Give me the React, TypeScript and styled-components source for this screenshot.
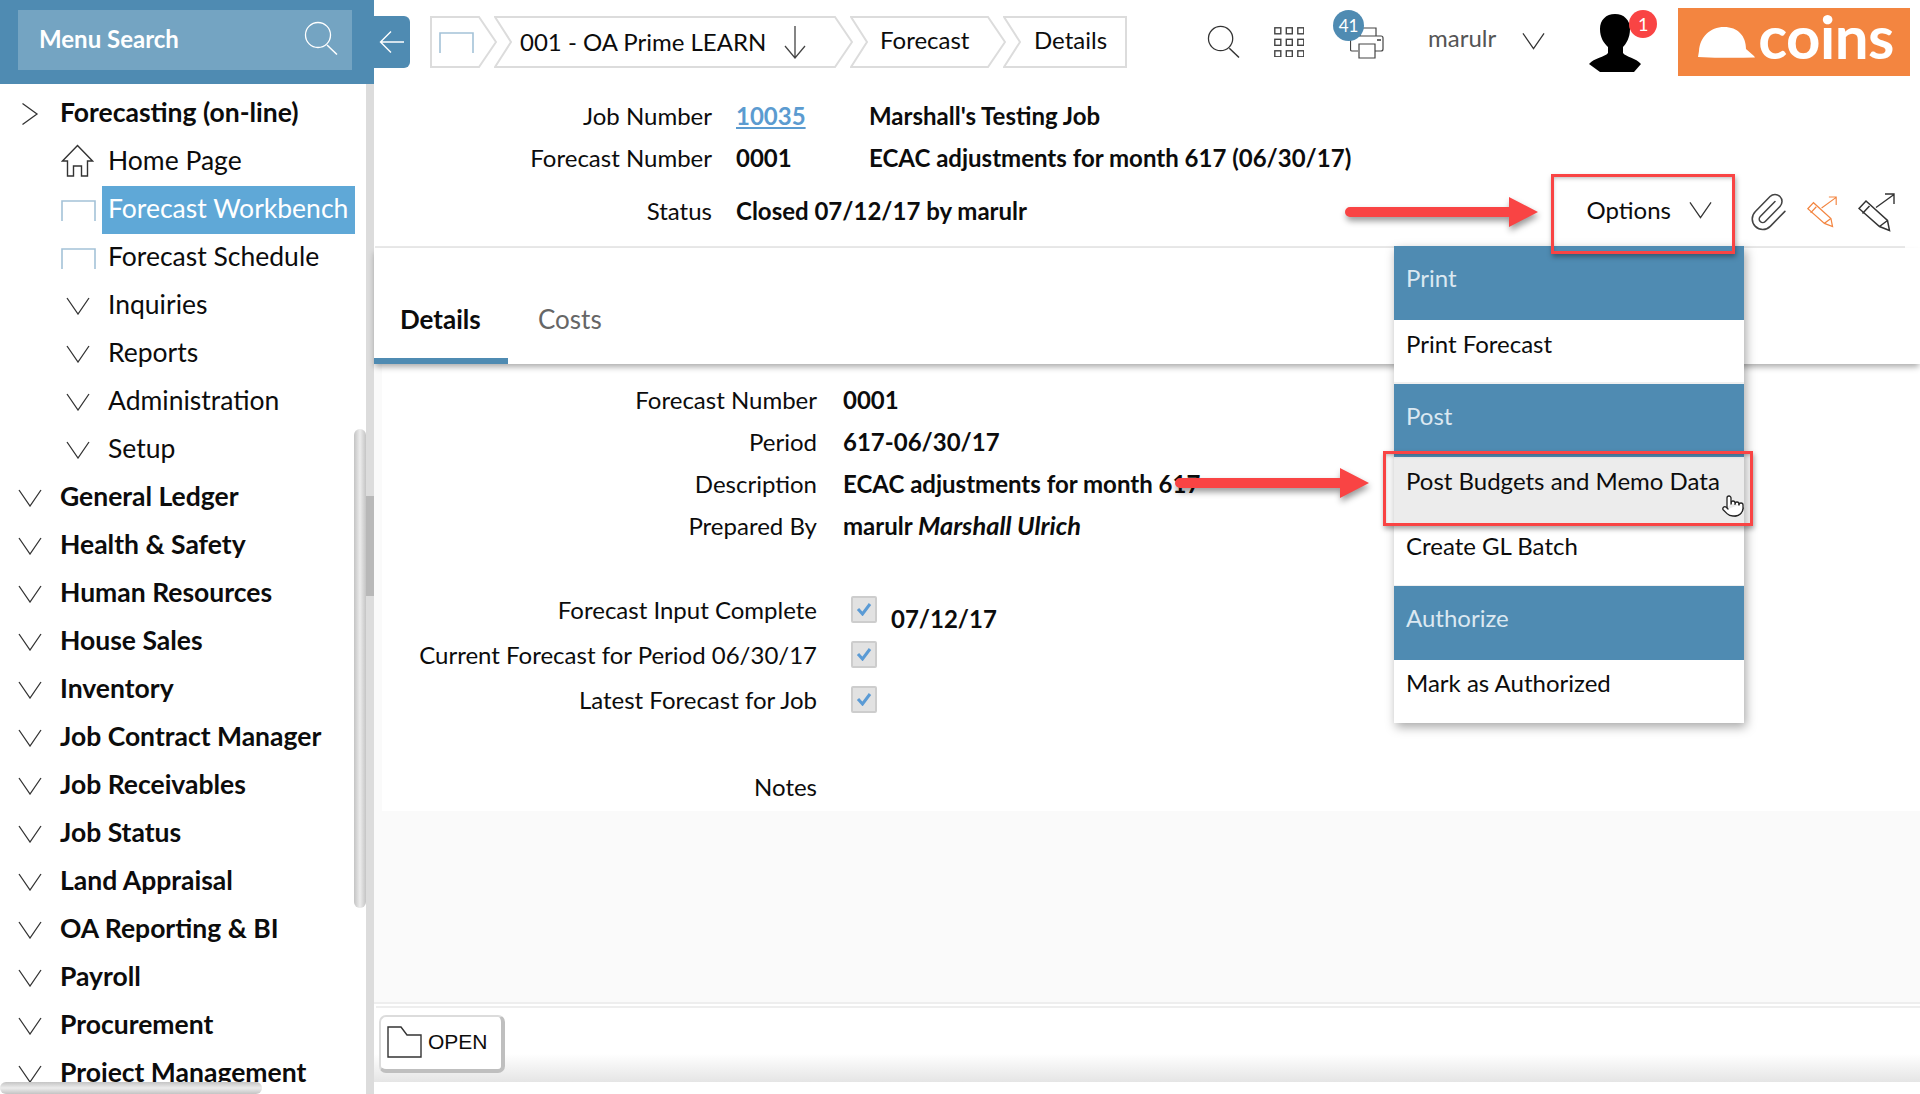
import React from "react";
import styled, { createGlobalStyle } from "styled-components";
import { Pointer, Paperclip } from "lucide-react";

const BLUE = "#4f8bb2";
const RED = "#f94444";
const INK = "#0c0c0c";

const Global = createGlobalStyle`
  html, body { margin: 0; padding: 0; background: #fff; overflow: hidden; }
  * { box-sizing: border-box; }
  body { font-family: Lato, "Open Sans", sans-serif; color: ${INK}; }
`;

const Page = styled.div`
  position: relative;
  width: 1920px;
  height: 1094px;
  overflow: hidden;
  display: grid;
  grid-template-columns: 374px 1fr;
`;

/* ---------- sidebar ---------- */
const Sidebar = styled.aside`
  position: relative;
  height: 1094px;
  display: flex;
  flex-direction: column;
  overflow: hidden;
`;
const SideHead = styled.div`
  flex: none;
  height: 84px;
  padding: 10px 22px 14px 18px;
  background: ${BLUE};
`;
const SearchBox = styled.div`
  height: 60px;
  padding: 0 14px 4px 21px;
  display: flex;
  align-items: center;
  justify-content: space-between;
  background: #74a4c2;
  color: #fff;
  font-size: 24px;
  font-weight: 700;
`;
const TreeClip = styled.div`
  height: 998px;
  padding-top: 6px;
  overflow: hidden;
`;
const Row = styled.div<{ $sub?: boolean }>`
  height: 48px;
  display: flex;
  align-items: center;
  padding-left: ${(p) => (p.$sub ? "61px" : "18px")};
`;
const IconSlot = styled.span<{ $sub?: boolean; $nudge?: number }>`
  flex: none;
  width: ${(p) => (p.$sub ? "47px" : "42px")};
  padding-left: ${(p) => p.$nudge ?? 0}px;
  display: flex;
  align-items: center;
`;
const RowLabel = styled.span<{ $sub?: boolean; $active?: boolean }>`
  font-size: 26.5px;
  line-height: 44px;
  padding-bottom: 4px;
  font-weight: ${(p) => (p.$sub ? 400 : 700)};
  color: ${(p) => (p.$active ? "#fff" : INK)};
  background: ${(p) => (p.$active ? "#5fa8d7" : "transparent")};
  padding-left: ${(p) => (p.$active ? "6px" : "0")};
  padding-right: ${(p) => (p.$active ? "7px" : "0")};
  margin-left: ${(p) => (p.$active ? "-6px" : "0")};
  white-space: nowrap;
`;
const VTrack = styled.div`
  position: absolute;
  right: 0;
  top: 84px;
  bottom: 0;
  width: 8px;
  background: #dcdcdc;
`;
const VTrackThumb = styled.div`
  position: absolute;
  left: 0;
  top: 412px;
  width: 8px;
  height: 100px;
  background: #b8b8b8;
`;
const VThumb = styled.div`
  position: absolute;
  left: 354px;
  top: 429px;
  width: 12px;
  height: 479px;
  border-radius: 6px;
  background: linear-gradient(90deg, #c4c4c4, #ececec 50%, #c4c4c4);
`;
const HBarMask = styled.div`
  position: absolute;
  left: 0;
  right: 8px;
  bottom: 0;
  height: 12px;
  background: #fff;
`;
const HThumb = styled.div`
  position: absolute;
  left: 0;
  bottom: 0;
  width: 262px;
  height: 12px;
  border-radius: 6px;
  background: linear-gradient(180deg, #c4c4c4, #ececec 50%, #c4c4c4);
`;

/* ---------- main ---------- */
const Main = styled.main`
  display: flex;
  flex-direction: column;
  min-width: 0;
  height: 1094px;
  background: #fff;
`;
const TopBar = styled.header`
  flex: none;
  height: 84px;
  padding-top: 16px;
  display: flex;
  align-items: flex-start;
`;
const BackTab = styled.div`
  width: 36px;
  height: 52px;
  background: ${BLUE};
  border-radius: 0 6px 6px 0;
  display: flex;
  align-items: center;
  justify-content: center;
`;
const Crumbs = styled.nav`
  margin-left: 20px;
  display: flex;
  height: 52px;
`;
const Crumb = styled.div<{ $w: number; $pad: number }>`
  position: relative;
  width: ${(p) => p.$w}px;
  margin-right: -3px;
  padding-left: ${(p) => p.$pad}px;
  display: flex;
  align-items: center;
  gap: 18px;
  font-size: 24px;
  white-space: nowrap;
`;
const CrumbShape = styled.svg`
  position: absolute;
  left: 0;
  top: 0;
  width: 100%;
  height: 100%;
  z-index: 0;
`;
const CrumbText = styled.span<{ $up?: number }>`
  position: relative;
  display: flex;
  align-items: center;
  margin-top: ${(p) => -(p.$up ?? 0)}px;
`;
const TopIcons = styled.div`
  margin-left: 83px;
  display: flex;
  align-items: flex-start;
`;
const IconBtn = styled.span<{ $ml?: number; $mt?: number }>`
  position: relative;
  display: block;
  margin-left: ${(p) => p.$ml ?? 0}px;
  margin-top: ${(p) => p.$mt ?? 0}px;
  line-height: 0;
`;
const Count = styled.span<{ $bg: string; $size: number; $left: number; $top: number; $fs: number }>`
  position: absolute;
  left: ${(p) => p.$left}px;
  top: ${(p) => p.$top}px;
  width: ${(p) => p.$size}px;
  height: ${(p) => p.$size}px;
  border-radius: 50%;
  background: ${(p) => p.$bg};
  color: #fff;
  font-size: ${(p) => p.$fs}px;
  line-height: ${(p) => p.$size}px;
  text-align: center;
`;
const UserName = styled.span`
  margin-left: 44px;
  margin-top: 7px;
  font-size: 24px;
  line-height: 30px;
  color: #555;
`;
const Logo = styled.div`
  position: relative;
  margin-left: 37px;
  margin-top: -8px;
  width: 232px;
  height: 68px;
  background: #f38540;
  padding-left: 19px;
  display: flex;
  align-items: center;
  gap: 3px;
`;
const LogoText = styled.span`
  color: #fff;
  font-size: 60px;
  line-height: 60px;
  font-weight: 700;
  letter-spacing: -0.5px;
  margin-top: -13px;
`;

const InfoBlock = styled.section`
  flex: none;
  height: 162px;
  padding-top: 10px;
  display: flex;
  flex-direction: column;
`;
const InfoRow = styled.div<{ $h: number }>`
  height: ${(p) => p.$h}px;
  display: flex;
  align-items: center;
  font-size: 24px;
`;
const InfoLabel = styled.span`
  flex: none;
  width: 338px;
  text-align: right;
`;
const InfoValue = styled.span<{ $w?: number }>`
  margin-left: 24px;
  width: ${(p) => (p.$w ? `${p.$w}px` : "auto")};
  font-weight: 700;
  white-space: nowrap;
`;
const JobLink = styled.a`
  color: #5b9bd0;
  text-decoration: underline;
`;
const Extra = styled.span`
  font-weight: 700;
  white-space: nowrap;
`;
const Tools = styled.div`
  margin-left: auto;
  padding-right: 25px;
  display: flex;
  align-items: center;
`;
const OptionsBtn = styled.div`
  display: flex;
  align-items: center;
  gap: 18px;
  font-size: 24px;
  margin-right: 35px;
  line-height: 28px;
`;
const ToolIcon = styled.span<{ $ml?: number }>`
  display: block;
  line-height: 0;
  margin-top: 4px;
  margin-left: ${(p) => p.$ml ?? 0}px;
  color: #444;
`;
const Divider = styled.div`
  flex: none;
  height: 2px;
  margin: 0 15px 0 1px;
  background: #e9e9e9;
`;
const TabBar = styled.div`
  position: relative;
  flex: none;
  height: 116px;
  padding-top: 13px;
  display: flex;
  box-shadow: 0 4px 6px -1px rgba(0, 0, 0, 0.33);
  z-index: 1;
  background: #fff;
`;
const Tab = styled.div<{ $on?: boolean }>`
  width: ${(p) => (p.$on ? "134px" : "auto")};
  height: 103px;
  padding: ${(p) => (p.$on ? "42px 0 0 26px" : "42px 0 0 30px")};
  font-size: 26px;
  line-height: 32px;
  font-weight: ${(p) => (p.$on ? 700 : 400)};
  color: ${(p) => (p.$on ? INK : "#666")};
  border-bottom: ${(p) => (p.$on ? `6px solid ${BLUE}` : "0")};
`;
const Body = styled.div`
  flex: 1;
  display: flex;
  flex-direction: column;
  padding-left: 8px;
  background: #fafafa;
  min-height: 0;
`;
const Panel = styled.div`
  flex: none;
  height: 447px;
  background: #fff;
  padding-top: 14px;
`;
const FormRow = styled.div<{ $h: number; $mt?: number }>`
  height: ${(p) => p.$h}px;
  margin-top: ${(p) => p.$mt ?? 0}px;
  display: flex;
  align-items: center;
  font-size: 24px;
`;
const FormLabel = styled.span`
  flex: none;
  width: 435px;
  text-align: right;
  white-space: nowrap;
`;
const FormValue = styled.span`
  margin-left: 26px;
  font-weight: 700;
  white-space: nowrap;
`;
const Italic = styled.em`
  font-style: italic;
  font-size: 25.4px;
`;
const CheckBox = styled.span`
  margin-left: 34px;
  width: 26px;
  height: 27px;
  background: #e2e2e2;
  border: 2px solid #cdcdcd;
  border-radius: 2px;
  display: flex;
  align-items: center;
  justify-content: center;
`;
const CheckDate = styled.span`
  margin-left: 14px;
  margin-top: 18px;
  font-weight: 700;
`;
const Spacer = styled.div`
  flex: 1;
`;
const Footer = styled.footer`
  flex: none;
  height: 92px;
  margin-left: -8px;
  background: #fff;
`;
const FooterRule = styled.div`
  height: 2px;
  background: #eee;
`;
const FooterRule2 = styled.div`
  height: 2px;
  margin: 2px 0 0 2px;
  background: #eee;
`;
const FooterBar = styled.div`
  height: 74px;
  padding: 7px 0 0 5px;
  background: linear-gradient(180deg, #fff 0, #fff 62%, #e5e5e5 100%);
`;
const OpenBtn = styled.div`
  width: 126px;
  height: 58px;
  padding-left: 6px;
  padding-bottom: 2px;
  background: #fff;
  border: 2px solid #dcdcdc;
  border-right: 4px solid #bfbfbf;
  border-bottom: 4px solid #bfbfbf;
  border-radius: 7px;
  display: flex;
  align-items: center;
  gap: 6px;
  font-family: "Liberation Sans", Arial, sans-serif;
  font-size: 21px;
`;

/* ---------- dropdown ---------- */
const Menu = styled.div`
  position: absolute;
  left: 1394px;
  top: 246px;
  width: 350px;
  background: #f0f0f0;
  box-shadow: 2px 4px 10px rgba(0, 0, 0, 0.35);
  z-index: 5;
  display: flex;
  flex-direction: column;
`;
const MenuHead = styled.div<{ $h: number }>`
  height: ${(p) => p.$h}px;
  padding: 14px 0 0 12px;
  background: ${BLUE};
  color: #dbe8f1;
  font-size: 24px;
  line-height: 36px;
`;
const MenuItem = styled.div<{ $h: number; $top: number; $hot?: boolean; $mb?: number }>`
  position: relative;
  height: ${(p) => p.$h}px;
  margin-bottom: ${(p) => p.$mb ?? 0}px;
  padding: ${(p) => p.$top}px 0 0 12px;
  background: ${(p) => (p.$hot ? "#ececec" : "#fff")};
  font-size: 24px;
  line-height: 36px;
  white-space: nowrap;
`;
const HandCursor = styled.span`
  position: absolute;
  left: 327px;
  top: 37px;
  line-height: 0;
  color: #222;
`;
const RedBox = styled.div<{ $l: number; $t: number; $w: number; $h: number }>`
  position: absolute;
  left: ${(p) => p.$l}px;
  top: ${(p) => p.$t}px;
  width: ${(p) => p.$w}px;
  height: ${(p) => p.$h}px;
  border: 3px solid ${RED};
  box-shadow: 1px 3px 5px rgba(0, 0, 0, 0.35), inset 1px 3px 4px -2px rgba(0, 0, 0, 0.3);
  z-index: 6;
`;
const ArrowSvg = styled.svg<{ $l: number; $t: number }>`
  position: absolute;
  left: ${(p) => p.$l}px;
  top: ${(p) => p.$t}px;
  z-index: 7;
  overflow: visible;
  filter: drop-shadow(1px 4px 3px rgba(0, 0, 0, 0.4));
`;

/* ---------- icons ---------- */
const Chev = ({ dir = "down", big = false }: { dir?: "down" | "right"; big?: boolean }) =>
  dir === "right" ? (
    <svg width="20" height="24" viewBox="0 0 20 24">
      <path d="M2.5 1.5 L17 12 L2.5 22.5" fill="none" stroke="#333" strokeWidth="1.3" />
    </svg>
  ) : (
    <svg width={big ? 23 : 24} height="18" viewBox="0 0 24 18">
      <path d="M1 1 L12 17 L23 1" fill="none" stroke="#333" strokeWidth="1.3" />
    </svg>
  );

const Blank = () => (
  <svg width="35" height="21" viewBox="0 0 35 21">
    <path d="M1 21 V1 H34 V21" fill="none" stroke="#a4c2d8" strokeWidth="1.6" />
  </svg>
);

const Home = () => (
  <svg width="33" height="34" viewBox="0 0 33 34" style={{ marginTop: -2 }}>
    <path
      d="M16.5 1.5 L31.5 17 L26.5 17 L26.5 32 L20.5 32 L20.5 22 L12.5 22 L12.5 32 L6.5 32 L6.5 17 L1.5 17 Z"
      fill="none"
      stroke="#333"
      strokeWidth="1.4"
    />
  </svg>
);

const Magnifier = ({ color = "#333", size = 34 }: { color?: string; size?: number }) => (
  <svg width={size} height={size} viewBox="0 0 34 34">
    <circle cx="14" cy="14" r="12.5" fill="none" stroke={color} strokeWidth="1.3" />
    <path d="M23 24 L33 33.5" stroke={color} strokeWidth="1.5" />
  </svg>
);

const Apps = () => (
  <svg width="30" height="30" viewBox="0 0 30 30">
    {[0, 11.5, 23].flatMap((y) =>
      [0, 11.5, 23].map((x) => (
        <rect key={`${x}-${y}`} x={x + 0.8} y={y + 0.8} width="6" height="6" fill="none" stroke="#444" strokeWidth="1.4" />
      ))
    )}
  </svg>
);

const PrinterIcon = () => (
  <svg width="34" height="32" viewBox="0 0 34 32">
    <path d="M10 9 V1 H26 V9" fill="none" stroke="#444" strokeWidth="1.2" />
    <path d="M8 24 H2 a1.5 1.5 0 0 1 -1.5 -1.5 V10.5 a1.5 1.5 0 0 1 1.5 -1.5 H31 a2 2 0 0 1 2 2 V22 a2 2 0 0 1 -2 2 H25" fill="none" stroke="#444" strokeWidth="1.2" />
    <path d="M9 17 H25 V31 H9 Z" fill="#fff" stroke="#444" strokeWidth="1.2" />
    <path d="M27 13 H31" stroke="#444" strokeWidth="1.6" />
  </svg>
);

const Avatar = () => (
  <svg width="52" height="58" viewBox="0 0 52 58" style={{ filter: "blur(0.6px)" }}>
    <path
      d="M26 0 C35 0 41 6 41 15 C41 24 37 30 34 33 L34 39 C37 43 47 44 52 50 L45 58 L11 58 L0 50 C5 44 16 43 19 39 L19 33 C15 29 11 24 11 15 C11 6 17 0 26 0 Z"
      fill="#000"
    />
  </svg>
);

const Helmet = () => (
  <svg width="58" height="31" viewBox="0 0 58 31">
    <path
      d="M1 30 L2 24 C3 10 13 0 27 0 C41 0 49 9 49 22 L57 29 L58 30.5 C40 31 20 31 1 30 Z"
      fill="#fff"
    />
  </svg>
);

const PencilOut = ({ color, w, h }: { color: string; w: number; h: number }) => (
  <svg width={w} height={h} viewBox="0 0 37 39">
    <path d="M1 15.5 L8 8 L29.5 27.5 L31.5 37.5 L21.5 33.5 Z" fill="none" stroke={color} strokeWidth="1.5" />
    <path d="M4.5 20.5 L11.5 13 M21.5 33.5 L29.5 27.5" fill="none" stroke={color} strokeWidth="1.5" />
    <path d="M18 14.5 L36 1.5 M27 1 H36 V11" fill="none" stroke={color} strokeWidth="1.4" />
  </svg>
);

const ShapeCrumb = ({ w, first, last }: { w: number; first?: boolean; last?: boolean }) => {
  const h = 52;
  const left = first ? `M1 1 V${h - 1}` : `M1 1 L17 ${h / 2} L1 ${h - 1}`;
  const right = last
    ? `L${w - 1} ${h - 1} L${w - 1} 1`
    : `L${w - 18} ${h - 1} L${w - 1} ${h / 2} L${w - 18} 1`;
  const d = `${left} ${right} Z`;
  return (
    <CrumbShape viewBox={`0 0 ${w} ${h}`}>
      <path d={d} fill="#fff" stroke="#dcdcdc" strokeWidth="2" />
    </CrumbShape>
  );
};

const RedArrow = ({ l, t, w }: { l: number; t: number; w: number }) => (
  <ArrowSvg $l={l} $t={t} width={w} height="30" viewBox={`0 0 ${w} 30`}>
    <path
      d={`M4 10 H${w - 29} V0 L${w} 15 L${w - 29} 30 V20 H4 a5 5 0 0 1 0 -10 Z`}
      fill={RED}
    />
  </ArrowSvg>
);

const tree: { label: string; sub?: boolean; icon: string; active?: boolean }[] = [
  { label: "Forecasting (on-line)", icon: "right" },
  { label: "Home Page", sub: true, icon: "home" },
  { label: "Forecast Workbench", sub: true, icon: "blank", active: true },
  { label: "Forecast Schedule", sub: true, icon: "blank" },
  { label: "Inquiries", sub: true, icon: "down" },
  { label: "Reports", sub: true, icon: "down" },
  { label: "Administration", sub: true, icon: "down" },
  { label: "Setup", sub: true, icon: "down" },
  ...[
    "General Ledger",
    "Health & Safety",
    "Human Resources",
    "House Sales",
    "Inventory",
    "Job Contract Manager",
    "Job Receivables",
    "Job Status",
    "Land Appraisal",
    "OA Reporting & BI",
    "Payroll",
    "Procurement",
    "Project Management",
  ].map((label) => ({ label, icon: "down" })),
];

const rowIcon = (k: string) =>
  k === "right" ? <Chev dir="right" /> : k === "home" ? <Home /> : k === "blank" ? <Blank /> : <Chev />;

const nudgeFor = (r: { sub?: boolean; icon: string }) =>
  r.icon === "right" ? 2 : r.sub && r.icon === "down" ? 5 : 0;

const Check = () => (
  <svg width="16" height="14" viewBox="0 0 16 14">
    <path d="M2 7 L6.5 12 L14 2" fill="none" stroke="#5b9bd5" strokeWidth="3" />
  </svg>
);

export default function App() {
  return (
    <Page>
      <Global />
      <Sidebar>
        <SideHead>
          <SearchBox>
            Menu Search
            <Magnifier color="#fff" />
          </SearchBox>
        </SideHead>
        <TreeClip>
          {tree.map((r) => (
            <Row key={r.label} $sub={r.sub}>
              <IconSlot $sub={r.sub} $nudge={nudgeFor(r)}>
                {rowIcon(r.icon)}
              </IconSlot>
              <RowLabel $sub={r.sub} $active={r.active}>
                {r.label}
              </RowLabel>
            </Row>
          ))}
        </TreeClip>
        <HBarMask />
        <HThumb />
        <VThumb />
        <VTrack>
          <VTrackThumb />
        </VTrack>
      </Sidebar>

      <Main>
        <TopBar>
          <BackTab>
            <svg width="26" height="24" viewBox="0 0 26 24">
              <path d="M25 12 H2 M12 1.5 L1.5 12 L12 22.5" fill="none" stroke="#fff" strokeWidth="1.4" />
            </svg>
          </BackTab>
          <Crumbs>
            <Crumb $w={67} $pad={9}>
              <ShapeCrumb w={67} first />
              <CrumbText>
                <Blank />
              </CrumbText>
            </Crumb>
            <Crumb $w={359} $pad={26}>
              <ShapeCrumb w={359} />
              <CrumbText $up={2}>001 - OA Prime LEARN</CrumbText>
              <CrumbText>
                <svg width="22" height="34" viewBox="0 0 22 34">
                  <path d="M11 1 V33 M1 21 L11 33 L21 21" fill="none" stroke="#444" strokeWidth="1.3" />
                </svg>
              </CrumbText>
            </Crumb>
            <Crumb $w={156} $pad={30}>
              <ShapeCrumb w={156} />
              <CrumbText $up={5}>Forecast</CrumbText>
            </Crumb>
            <Crumb $w={124} $pad={31}>
              <ShapeCrumb w={124} last />
              <CrumbText $up={5}>Details</CrumbText>
            </Crumb>
          </Crumbs>
          <TopIcons>
            <IconBtn $mt={9}>
              <Magnifier size={33} />
            </IconBtn>
            <IconBtn $ml={34} $mt={11}>
              <Apps />
            </IconBtn>
            <IconBtn $ml={46} $mt={11}>
              <PrinterIcon />
              <Count $bg={BLUE} $size={31} $left={-17} $top={-17} $fs={17}>
                41
              </Count>
            </IconBtn>
            <UserName>marulr</UserName>
            <IconBtn $ml={26} $mt={16}>
              <Chev big />
            </IconBtn>
            <IconBtn $ml={44} $mt={-2}>
              <Avatar />
              <Count $bg={RED} $size={28} $left={40} $top={-4} $fs={18}>
                1
              </Count>
            </IconBtn>
            <Logo>
              <Helmet />
              <LogoText>coins</LogoText>
            </Logo>
          </TopIcons>
        </TopBar>

        <InfoBlock>
          <InfoRow $h={42}>
            <InfoLabel>Job Number</InfoLabel>
            <InfoValue $w={133}>
              <JobLink>10035</JobLink>
            </InfoValue>
            <Extra>Marshall's Testing Job</Extra>
          </InfoRow>
          <InfoRow $h={42}>
            <InfoLabel>Forecast Number</InfoLabel>
            <InfoValue $w={133}>0001</InfoValue>
            <Extra>ECAC adjustments for month 617 (06/30/17)</Extra>
          </InfoRow>
          <InfoRow $h={64}>
            <InfoLabel>Status</InfoLabel>
            <InfoValue>Closed 07/12/17 by marulr</InfoValue>
            <Tools>
              <OptionsBtn>
                Options
                <Chev big />
              </OptionsBtn>
              <ToolIcon>
                <Paperclip size={42} strokeWidth={0.9} />
              </ToolIcon>
              <ToolIcon $ml={18}>
                <PencilOut color="#f38540" w={30} h={32} />
              </ToolIcon>
              <ToolIcon $ml={21}>
                <PencilOut color="#333" w={37} h={39} />
              </ToolIcon>
            </Tools>
          </InfoRow>
        </InfoBlock>
        <Divider />
        <TabBar>
          <Tab $on>Details</Tab>
          <Tab>Costs</Tab>
        </TabBar>

        <Body>
          <Panel>
            <FormRow $h={42}>
              <FormLabel>Forecast Number</FormLabel>
              <FormValue>0001</FormValue>
            </FormRow>
            <FormRow $h={42}>
              <FormLabel>Period</FormLabel>
              <FormValue>617-06/30/17</FormValue>
            </FormRow>
            <FormRow $h={42}>
              <FormLabel>Description</FormLabel>
              <FormValue>ECAC adjustments for month 617</FormValue>
            </FormRow>
            <FormRow $h={42}>
              <FormLabel>Prepared By</FormLabel>
              <FormValue>
                marulr <Italic>Marshall Ulrich</Italic>
              </FormValue>
            </FormRow>
            <FormRow $h={44} $mt={41}>
              <FormLabel>Forecast Input Complete</FormLabel>
              <CheckBox>
                <Check />
              </CheckBox>
              <CheckDate>07/12/17</CheckDate>
            </FormRow>
            <FormRow $h={46}>
              <FormLabel>Current Forecast for Period 06/30/17</FormLabel>
              <CheckBox>
                <Check />
              </CheckBox>
            </FormRow>
            <FormRow $h={44}>
              <FormLabel>Latest Forecast for Job</FormLabel>
              <CheckBox>
                <Check />
              </CheckBox>
            </FormRow>
            <FormRow $h={42} $mt={44}>
              <FormLabel>Notes</FormLabel>
            </FormRow>
          </Panel>
          <Spacer />
          <Footer>
            <FooterRule />
            <FooterRule2 />
            <FooterBar>
              <OpenBtn>
                <svg width="35" height="32" viewBox="0 0 35 32">
                  <path d="M1 31 V1 H14 L20 9 H34 V31 Z" fill="#fff" stroke="#333" strokeWidth="1.4" />
                </svg>
                OPEN
              </OpenBtn>
            </FooterBar>
          </Footer>
        </Body>
      </Main>

      <Menu>
        <MenuHead $h={74}>Print</MenuHead>
        <MenuItem $h={62} $mb={2} $top={6}>Print Forecast</MenuItem>
        <MenuHead $h={73}>Post</MenuHead>
        <MenuItem $h={68} $top={6} $hot>
          Post Budgets and Memo Data
          <HandCursor>
            <Pointer size={24} strokeWidth={1.3} fill="#fff" />
          </HandCursor>
        </MenuItem>
        <MenuItem $h={60} $mb={1} $top={3}>Create GL Batch</MenuItem>
        <MenuHead $h={74}>Authorize</MenuHead>
        <MenuItem $h={63} $top={5}>Mark as Authorized</MenuItem>
      </Menu>

      <RedBox $l={1551} $t={174} $w={184} $h={80} />
      <RedBox $l={1383} $t={451} $w={370} $h={75} />
      <RedArrow l={1346} t={197} w={192} />
      <RedArrow l={1176} t={468} w={193} />
    </Page>
  );
}
